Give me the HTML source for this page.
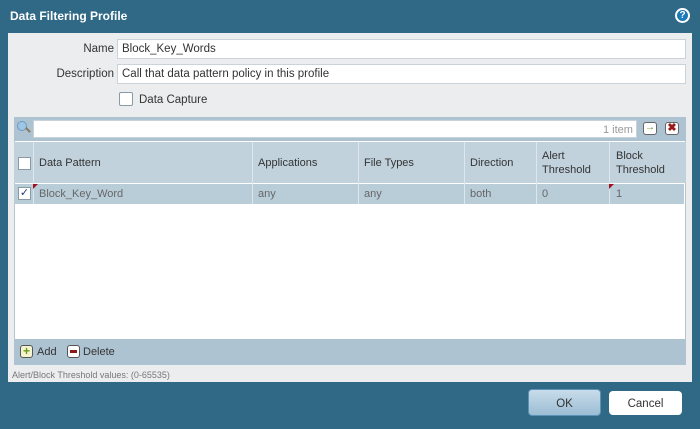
<!DOCTYPE html>
<html><head><style>
*{margin:0;padding:0;box-sizing:border-box}
body{width:700px;height:429px;background:#306985;font-family:"Liberation Sans",sans-serif;font-size:12px;color:#333;position:relative;overflow:hidden}
.a{position:absolute}
.title{left:10px;top:9px;color:#fff;font-weight:bold;font-size:12px}
.panel{left:8px;top:33px;width:684px;height:349px;background:#ecedee}
.lbl{font-size:11.5px;color:#333;text-align:right}
.inp{background:#fff;border:1px solid #ccd3d8;height:20px;font-size:11.5px;padding:3px 4px}
.cb{width:13px;height:13px;border:1px solid #8a9aa5;background:#fff}
.hd{font-size:11px;color:#333;line-height:14px}
.sep{width:1px;background:#dfe7ec}
.cell{font-size:11px;color:#666;top:188px}
</style></head><body>
<div class="a title">Data Filtering Profile</div>
<div class="a" style="left:675px;top:8px;width:15px;height:15px;border-radius:50%;background:#1d7ab8;border:2px solid #fff;color:#fff;font-size:10px;font-weight:bold;text-align:center;line-height:11px">?</div>
<div class="a panel"></div>
<div class="a lbl" style="left:40px;top:43px;width:74px">Name</div>
<div class="a inp" style="left:117px;top:39px;width:569px">Block_Key_Words</div>
<div class="a lbl" style="left:30px;top:68px;width:84px">Description</div>
<div class="a inp" style="left:117px;top:64px;width:569px">Call that data pattern policy in this profile</div>
<div class="a cb" style="left:119px;top:92px;width:14px;height:14px;border-radius:2px"></div>
<div class="a" style="left:139px;top:94px;font-size:11.5px">Data Capture</div>
<div class="a" style="left:14px;top:117px;width:672px;height:248px;background:#fff;border:1px solid #b6c6d1"></div>
<div class="a" style="left:14px;top:117px;width:672px;height:24px;background:#aec3d1"></div>
<div class="a" style="left:17px;top:121px;width:10px;height:10px;border-radius:50%;background:#9fc6e6;border:1px solid #6b9ac0"></div>
<div class="a" style="left:25px;top:129px;width:6px;height:2px;background:#8a7a5a;transform:rotate(45deg)"></div>
<div class="a" style="left:33px;top:120px;width:604px;height:18px;background:#fff;border:1px solid #c8d2d9"></div>
<div class="a" style="left:603px;top:124px;font-size:11px;color:#999">1 item</div>
<div class="a" style="left:643px;top:122px;width:14px;height:13px;border:1px solid #666;border-radius:3px;background:#fff;color:#6a8a1a;font-size:10px;line-height:10px;text-align:center;font-weight:bold">→</div>
<div class="a" style="left:665px;top:122px;width:14px;height:13px;border:1px solid #666;border-radius:3px;background:#fff;color:#9a1a1a;font-size:11px;line-height:11px;text-align:center;font-weight:bold">✖</div>
<div class="a" style="left:14px;top:142px;width:672px;height:41px;background:#c1d2dd"></div>
<div class="a" style="left:14px;top:184px;width:670px;height:20px;background:#b9cdd9"></div>
<div class="a sep" style="left:33px;top:142px;height:62px"></div>
<div class="a sep" style="left:252px;top:142px;height:62px"></div>
<div class="a sep" style="left:358px;top:142px;height:62px"></div>
<div class="a sep" style="left:464px;top:142px;height:62px"></div>
<div class="a sep" style="left:536px;top:142px;height:62px"></div>
<div class="a sep" style="left:609px;top:142px;height:62px"></div>
<div class="a cb" style="left:18px;top:157px"></div>
<div class="a hd" style="left:39px;top:156px">Data Pattern</div>
<div class="a hd" style="left:258px;top:156px">Applications</div>
<div class="a hd" style="left:364px;top:156px">File Types</div>
<div class="a hd" style="left:470px;top:156px">Direction</div>
<div class="a hd" style="left:542px;top:149px">Alert<br>Threshold</div>
<div class="a hd" style="left:616px;top:149px">Block<br>Threshold</div>
<div class="a cb" style="left:18px;top:187px;font-size:11px;line-height:11px;text-align:center;color:#223a7a">✓</div>
<div class="a" style="left:33px;top:184px;width:0;height:0;border-top:5px solid #a01020;border-right:5px solid transparent"></div>
<div class="a" style="left:609px;top:184px;width:0;height:0;border-top:5px solid #a01020;border-right:5px solid transparent"></div>
<div class="a cell" style="left:39px">Block_Key_Word</div>
<div class="a cell" style="left:258px">any</div>
<div class="a cell" style="left:364px">any</div>
<div class="a cell" style="left:470px">both</div>
<div class="a cell" style="left:542px">0</div>
<div class="a cell" style="left:616px">1</div>
<div class="a" style="left:14px;top:339px;width:672px;height:26px;background:#aec3d1"></div>
<div class="a" style="left:20px;top:345px;width:13px;height:13px;border:1px solid #555;border-radius:3px;background:#f4f4d0;color:#6a9a10;font-weight:bold;font-size:12px;line-height:11px;text-align:center">+</div>
<div class="a" style="left:37px;top:346px;font-size:11px">Add</div>
<div class="a" style="left:67px;top:345px;width:13px;height:13px;border:1px solid #555;border-radius:3px;background:#fff"><div style="margin:4px 2px;width:7px;height:3px;background:#8a1a1a"></div></div>
<div class="a" style="left:83px;top:346px;font-size:11px">Delete</div>
<div class="a" style="left:12px;top:370px;font-size:9px;color:#777">Alert/Block Threshold values: (0-65535)</div>
<div class="a" style="left:528px;top:389px;width:73px;height:27px;border-radius:4px;background:linear-gradient(#c8dcea,#9cbdd4);border:1px solid #5d92b8;text-align:center;line-height:29px;font-size:11.5px">OK</div>
<div class="a" style="left:609px;top:391px;width:73px;height:24px;border-radius:4px;background:#fff;text-align:center;line-height:26px;font-size:11.5px">Cancel</div>
</body></html>
